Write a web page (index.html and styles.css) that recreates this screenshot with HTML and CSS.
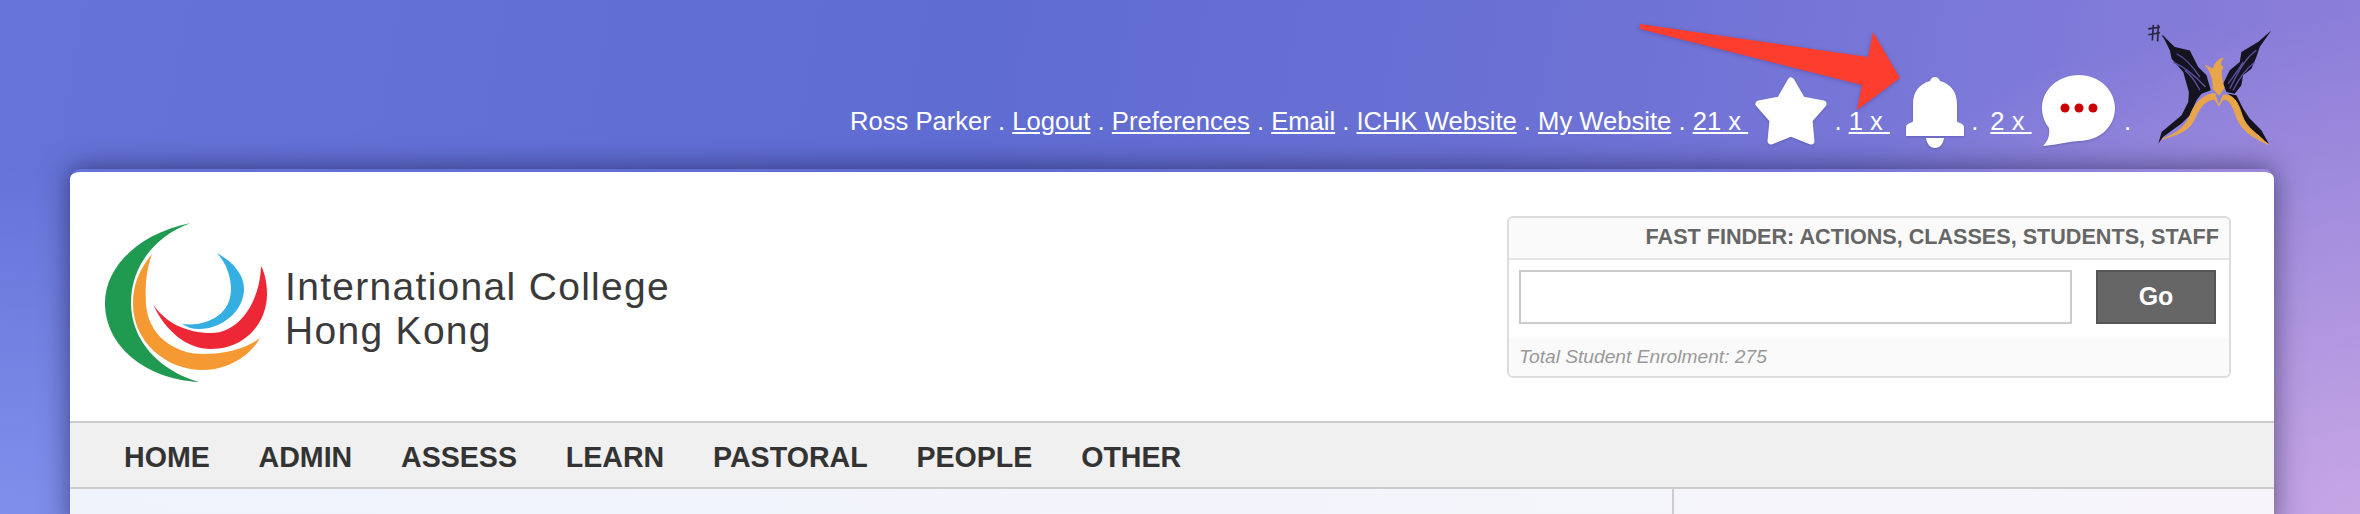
FILE: index.html
```html
<!DOCTYPE html>
<html lang="en">
<head>
<meta charset="utf-8">
<title>International College Hong Kong</title>
<link rel="stylesheet" href="styles.css">
</head>
<body>
<div class="page">
  <svg class="arrow" width="280" height="100" viewBox="1630 20 280 100" aria-hidden="true">
    <polygon points="1640,24 1868,57 1873,32 1900,78 1857,110 1862,85 1640,29" fill="#fd3d2e"/>
  </svg>
  <header class="topbar">
    <div class="minilinks">
      Ross Parker . <a href="#">Logout</a> . <a href="#">Preferences</a> . <a href="#">Email</a> . <a href="#">ICHK Website</a> . <a href="#">My Website</a> . <a href="#">21 x </a>
      <svg class="icon star" width="72" height="70" viewBox="0 0 72 70"><polygon points="36,4 47,23 68,27 54,43 56,64 36,56 16,64 18,43 4,27 25,23" fill="#fff" stroke="#fff" stroke-width="7" stroke-linejoin="round"/></svg>
      . <a href="#">1 x </a>
      <svg class="icon bell" width="58" height="71" viewBox="0 0 58 71"><path d="M29 0C32 0 33 2 34 4C45 7 51 15 51 27V44C51 46 58 46 58 50V59H0V50C0 46 7 46 7 44V27C7 15 13 7 24 4C25 2 26 0 29 0Z" fill="#fff"/><path d="M20 61H38C37 68 33 71 29 71C25 71 21 68 20 61Z" fill="#fff"/></svg>
      . <a class="after-bell" href="#">2 x </a>
      <svg class="icon chat" width="73" height="71" viewBox="0 0 73 71"><path d="M37 0C57 0 73 15 73 33C73 52 57 66 37 66C30 66 20 69 1 71C6 66 8 60 7 53C3 48 0 41 0 33C0 15 16 0 37 0Z" fill="#fff"/><circle cx="23" cy="33" r="4.5" fill="#c00"/><circle cx="37" cy="33" r="4.5" fill="#c00"/><circle cx="51" cy="33" r="4.5" fill="#c00"/></svg>
      <span class="last-dot">.</span>
    </div>
    <svg class="house" width="128" height="125" viewBox="80 30 385 375" aria-hidden="true">
      <path d="M90 50L125 45M90 68L125 62M105 38L102 85M120 38L118 88M132 70L165 105" fill="none" stroke="#2a2640" stroke-width="5"/>
      <path d="M135 75L170 105L215 115L240 165L265 190L278 235L250 245L235 265L215 310L190 335L135 375L120 395L130 360L190 310L210 270L212 240L195 180L160 140L155 115Z" fill="#15131f"/>
      <path d="M460 55L425 105L415 135L400 170L375 190L370 220L350 245L325 240L315 215L335 175L365 150L370 120L420 90Z" fill="#15131f"/>
      <path d="M330 245L355 250L375 290L395 320L430 355L452 395L435 385L395 350L370 320L350 270Z" fill="#15131f"/>
      <path d="M175 125C205 140 225 165 245 195M165 150C200 165 230 190 262 225M200 175C220 190 235 215 245 235M375 150C360 175 345 195 330 215M415 115C385 135 365 170 335 230M410 150C385 170 365 195 345 235" fill="none" stroke="#5a4fa0" stroke-width="4"/>
      <path d="M132 382C175 365 205 345 220 300C235 265 265 245 290 245L302 282L315 250C345 245 360 270 372 310C385 350 420 365 450 398C415 380 375 365 355 315C345 285 335 262 315 262L302 282L290 262C265 262 245 285 232 315C215 360 170 370 132 382Z" fill="#e8a54a" stroke="#e8a54a" stroke-width="3"/>
      <path d="M262 160C275 165 282 172 285 170C290 155 300 140 315 138C305 150 305 160 315 165C305 175 310 200 318 228L302 250L285 230C285 205 280 180 262 160Z" fill="#e8a54a" stroke="#e8a54a" stroke-width="3"/>
    </svg>
  </header>
  <div class="card">
    <div class="banner">
      <div class="logo">
        <svg class="logo-mark" width="175" height="172" viewBox="100 215 175 172" aria-hidden="true">
          <path d="M190.6 222C140 232 105 265 105 302C105 345 145 378 199 381C160 370 131 340 131 302C131 265 155 235 190.6 222Z" fill="#1f9a50"/>
          <path d="M152 253C138 270 133 285 133 303C133 340 165 369 203 369C228 369 250 355 260 337C245 348 225 353 203 353C175 353 148 335 146 303C145 285 146 270 152 253Z" fill="#f59a33"/>
          <path d="M153 303C165 330 187 348 211 348C245 348 267 322 267 293C267 283 265 272 261 265C260 300 240 332 211 332C187 332 165 322 153 303Z" fill="#ee2737"/>
          <path d="M217 252C235 262 244 275 244 288C244 310 222 328 199 328C192 328 187 326 182 323C205 326 231 315 231 288C231 275 226 262 217 252Z" fill="#35aee2"/>
        </svg>
        <div class="logo-text">International College<br>Hong Kong</div>
      </div>
      <form class="finder">
        <div class="finder-head">Fast Finder: Actions, Classes, Students, Staff</div>
        <div class="finder-row">
          <input class="finder-input" type="text" aria-label="Fast finder">
          <button class="finder-go" type="button">Go</button>
        </div>
        <div class="finder-foot">Total Student Enrolment: 275</div>
      </form>
    </div>
    <nav class="menu">
      <a href="#">HOME</a><a href="#">ADMIN</a><a href="#">ASSESS</a><a href="#">LEARN</a><a href="#">PASTORAL</a><a href="#">PEOPLE</a><a href="#">OTHER</a>
    </nav>
    <div class="content">
      <main class="content-main"></main>
      <aside class="content-side"></aside>
    </div>
  </div>
</div>
</body>
</html>
```
FILE: styles.css
```css
* { box-sizing: border-box; }
html, body { margin: 0; height: 100%; }
body {
  overflow: hidden;
  font-family: "Liberation Sans", Arial, sans-serif;
  background:
    radial-gradient(700px 350px at 0% 100%, rgba(135,150,240,.8), rgba(135,150,240,0)),
    radial-gradient(700px 500px at 100% 100%, rgba(205,170,230,.9), rgba(205,170,230,0)),
    linear-gradient(100deg, #6674d9 0%, #5f6cd2 40%, #6a70d4 62%, #7a78d8 80%, #8f7fd9 100%);
}
.page { position: relative; height: 514px; overflow: hidden; }
.arrow { position: absolute; left: 1630px; top: 20px; filter: drop-shadow(0 1px 2px rgba(60,40,110,.35)); }
.topbar {
  height: 168px;
  display: flex;
  justify-content: flex-end;
  align-items: flex-start;
  padding: 22px 87px 0 0;
}
.minilinks {
  margin-top: 53px;
  margin-right: 14px;
  font-size: 25.6px;
  line-height: 76px;
  height: 76px;
  color: #fff;
  white-space: nowrap;
}
.minilinks a { color: #fff; text-decoration: underline; white-space: pre; }
.icon { vertical-align: -17px; filter: blur(.5px) drop-shadow(0 1px 1px rgba(60,50,120,.35)); }
.bell { margin-left: 9px; vertical-align: -18px; }
.after-bell { margin-left: 5px; }
.chat { margin-left: 3px; vertical-align: -16px; }
.last-dot { margin-left: 2px; }
.house { flex: none; filter: blur(.6px); }
.card {
  margin: 0 86px 0 70px;
  height: 360px;
  border-top: 4px solid transparent;
  border-radius: 10px 10px 0 0;
  background: #fff;
  background-clip: padding-box;
  box-shadow: 0 0 28px rgba(0,0,30,.5);
  display: flex;
  flex-direction: column;
}
.banner {
  height: 249px;
  flex: none;
  display: flex;
  justify-content: space-between;
  align-items: center;
  padding: 0 43px 0 30px;
}
.logo { display: flex; align-items: center; gap: 10px; margin-top: 10px; }
.logo-mark { filter: blur(.6px); }
.logo-text {
  font-size: 39px;
  line-height: 44px;
  letter-spacing: 1.3px;
  color: #3a3a3a;
  margin-top: 14px;
}
.finder {
  width: 724px;
  height: 162px;
  border: 2px solid #ddd;
  border-radius: 6px;
  background: #fafafa;
  display: flex;
  flex-direction: column;
}
.finder-head {
  height: 42px;
  padding: 0 10px 0 0;
  text-align: right;
  font-size: 21.6px;
  font-weight: bold;
  line-height: 38px;
  text-transform: uppercase;
  color: #666;
  border-bottom: 2px solid #e6e6e6;
}
.finder-row {
  height: 78px;
  display: flex;
  justify-content: space-between;
  padding: 10px 13px 0 10px;
  background: #fff;
}
.finder-input {
  width: 553px;
  height: 54px;
  border: 2px solid #ccc;
  background: #fff;
  padding: 0;
}
.finder-go {
  width: 120px;
  height: 54px;
  border: 2px solid #555;
  background: #666;
  color: #fff;
  font: bold 25px "Liberation Sans", Arial, sans-serif;
  padding: 0;
}
.finder-foot {
  padding: 8px 10px 0;
  font-size: 19.2px;
  font-style: italic;
  color: #999;
}
.menu {
  height: 68px;
  flex: none;
  display: flex;
  align-items: center;
  gap: 48.75px;
  padding: 5px 0 0 54px;
  background: #f0f0f0;
  border-top: 2px solid #ccc;
  border-bottom: 2px solid #ccc;
}
.menu a {
  font-size: 28.6px;
  font-weight: bold;
  color: #333;
  text-decoration: none;
}
.content { flex: 1; display: flex; background: linear-gradient(90deg, #eff3fc, #f7f5fb); }
.content-main { width: 1604px; border-right: 2px solid #ccc; }
.content-side { flex: 1; }
```
